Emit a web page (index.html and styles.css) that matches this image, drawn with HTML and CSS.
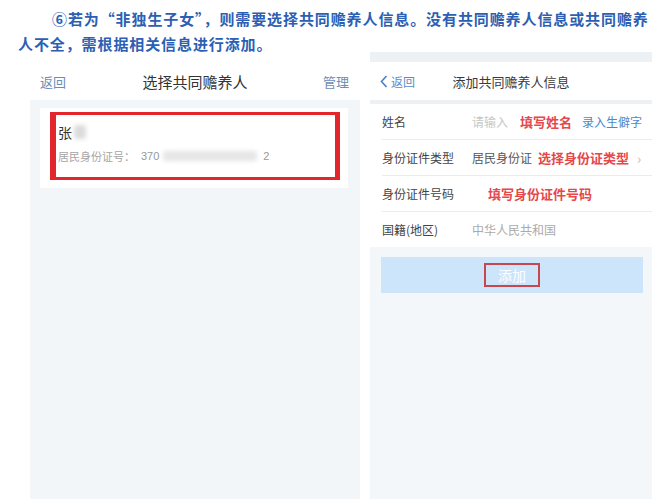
FILE: index.html
```html
<!DOCTYPE html>
<html lang="zh-CN">
<head>
<meta charset="utf-8">
<title>添加共同赡养人</title>
<link rel="stylesheet" href="styles.css">
</head>
<body>
<p class="intro">⑥若为“非独生子女”，则需要选择共同赡养人信息。没有共同赡养人信息或共同赡养人不全，需根据相关信息进行添加。</p>
<div class="shots">
  <section class="panel panel-left">
    <header class="nav">
      <span class="nav-link">返回</span>
      <span class="nav-title">选择共同赡养人</span>
      <span class="nav-link">管理</span>
    </header>
    <div class="card">
      <div class="mark">
        <div class="person-name">张<span class="blur blur-name"></span></div>
        <div class="person-id">居民身份证号：<span class="id-num id-start">370</span><span class="blur blur-id"></span><span class="id-num">2</span></div>
      </div>
    </div>
  </section>
  <section class="panel panel-right">
    <div class="strip"></div>
    <header class="nav nav-right">
      <span class="back"><svg class="chev" width="8" height="13" viewBox="0 0 8 13"><path d="M6.5 1 L1.5 6.5 L6.5 12" fill="none" stroke="#4a80c4" stroke-width="1.6"/></svg>返回</span>
      <span class="nav-title small">添加共同赡养人信息</span>
    </header>
    <div class="gap"></div>
    <div class="form">
      <div class="row">
        <span class="label">姓名</span>
        <span class="value">
          <span class="placeholder">请输入</span>
          <span class="note note-name">填写姓名</span>
          <span class="rare">录入生僻字</span>
        </span>
      </div>
      <div class="row">
        <span class="label">身份证件类型</span>
        <span class="value">
          <span class="plain">居民身份证</span>
          <span class="note note-type">选择身份证类型</span>
          <span class="arrow">›</span>
        </span>
      </div>
      <div class="row">
        <span class="label">身份证件号码</span>
        <span class="value">
          <span class="note note-id">填写身份证件号码</span>
        </span>
      </div>
      <div class="row row-last">
        <span class="label">国籍(地区)</span>
        <span class="value"><span class="muted">中华人民共和国</span></span>
      </div>
    </div>
    <div class="actions">
      <div class="btn"><span class="btn-mark">添加</span></div>
    </div>
  </section>
</div>
</body>
</html>
```

FILE: styles.css
```css
* { box-sizing: border-box; }
html, body { margin: 0; padding: 0; background: #fff; }
body {
  width: 660px;
  height: 499px;
  overflow: hidden;
  font-family: "Noto Sans CJK SC", "Noto Sans", sans-serif;
  display: flex;
  flex-direction: column;
}
.intro {
  margin: 0;
  height: 52px;
  padding: 6px 2px 0 18px;
  text-indent: 34px;
  font-size: 15px;
  line-height: 25px;
  letter-spacing: 0.9px;
  font-weight: 700;
  color: #2c5fb3;
}
.shots {
  flex: 1;
  display: flex;
  align-items: stretch;
}
.panel { display: flex; flex-direction: column; }
.panel-left {
  width: 330px;
  margin-left: 30px;
  margin-top: 10px;
  background: #f3f6f9;
}
.panel-right {
  width: 282px;
  margin-left: 10px;
  background: #f4f7fa;
}
.nav {
  height: 38px;
  background: #fff;
  display: flex;
  align-items: center;
  justify-content: space-between;
  padding: 0 11px 0 10px;
  position: relative;
}
.nav-link { font-size: 13px; color: #6a8db6; }
.nav-title { font-size: 15px; color: #333; position: absolute; left: 0; right: 0; text-align: center; }
.nav-title.small { font-size: 13px; color: #3a3a3a; }
.card {
  margin: 8px 12px 0 10px;
  height: 80px;
  background: #fff;
  padding: 4px 8px 0 10px;
}
.mark {
  height: 68px;
  border-style: solid;
  border-color: #e3252c;
  border-width: 3px 5px 3px 6px;
  padding: 7px 0 0 2px;
}
.person-name { font-size: 14px; color: #333; line-height: 20px; display: flex; align-items: center; }
.blur { display: inline-block; background: #dcdcdc; filter: blur(2px); border-radius: 2px; }
.blur-name { width: 12px; height: 14px; margin-left: 2px; }
.person-id { margin-top: 6px; font-size: 11px; color: #a6a6a6; line-height: 16px; display: flex; align-items: center; }
.id-num { font-family: "Liberation Sans", sans-serif; color: #999; }
.id-start { margin-left: 6px; }
.blur-id { width: 94px; height: 10px; margin: 0 6px 0 4px; background: #e6e6e6; }
.strip { height: 10px; background: #eef1f4; }
.nav-right { padding-left: 10px; }
.back { display: flex; align-items: center; gap: 3px; font-size: 12px; color: #5b8cc8; }
.gap { height: 4px; background: #eef1f4; }
.form { background: #fff; }
.row {
  height: 36px;
  margin-left: 12px;
  display: flex;
  align-items: center;
  border-bottom: 1px solid #ececec;
  font-size: 12px;
}
.row-last { border-bottom: none; height: 35px; }
.label { width: 90px; color: #444; }
.value { display: flex; align-items: center; }
.placeholder { color: #c6c6c6; }
.note { color: #e5474b; font-weight: 700; font-size: 13px; }
.note-name { margin-left: 12px; }
.rare { margin-left: 10px; color: #4d88cb; }
.plain { color: #555; }
.note-type { margin-left: 6px; }
.arrow { margin-left: 8px; color: #bbb; font-size: 14px; }
.note-id { margin-left: 16px; }
.muted { color: #aaa; }
.actions { padding: 10px 9px 0 11px; }
.btn {
  height: 36px;
  background: #cce5fb;
  display: flex;
  align-items: center;
  justify-content: center;
}
.btn-mark {
  border: 2px solid #c8464c;
  padding: 0 12px;
  line-height: 20px;
  font-size: 14px;
  color: #fff;
}
```
